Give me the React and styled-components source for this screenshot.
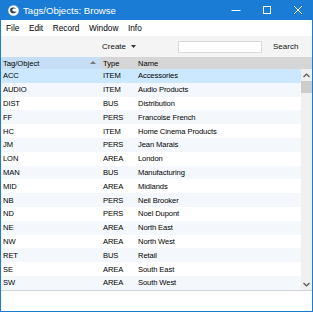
import React from 'react';
import styled, { createGlobalStyle } from 'styled-components';

const Global = createGlobalStyle`
  html, body { margin: 0; padding: 0; background: #fff; }
  body { font-family: "Liberation Sans", Arial, sans-serif; }
  * { box-sizing: border-box; }
`;

const Window = styled.div`
  width: 313px;
  height: 312px;
  border: 1px solid #1b7cd5;
  border-top: none;
  display: flex;
  flex-direction: column;
  overflow: hidden;
  background: #fff;
`;

const TitleBar = styled.div`
  height: 20px;
  margin: 0 -1px;
  background: #1b7cd5;
  display: flex;
  align-items: center;
  color: #fff;
  padding-left: 8px;
`;

const TitleText = styled.span`
  margin-left: 4px;
  flex: 1;
  font-size: 9.6px;
`;

const WinButton = styled.div`
  width: 31px;
  height: 20px;
  display: flex;
  align-items: center;
  justify-content: center;
`;

const MenuBar = styled.div`
  height: 16px;
  display: flex;
  align-items: center;
  padding-left: 5px;
  gap: 9.5px;
  font-size: 8.3px;
  color: #000;
  background: #fff;
`;

const MenuItem = styled.span``;

const Toolbar = styled.div`
  height: 21px;
  background: #f4f4f4;
  display: flex;
  align-items: center;
  font-size: 8px;
  color: #111;
`;

const CreateButton = styled.div`
  margin-left: 101px;
  display: flex;
  align-items: center;
  gap: 5px;
`;

const SearchBox = styled.div`
  margin-left: 42px;
  width: 84px;
  height: 12px;
  background: #fff;
  border: 1px solid #d9d9d9;
`;

const SearchButton = styled.span`
  margin-left: 11px;
`;

const Header = styled.div`
  height: 12px;
  display: flex;
  background: #d6d6d6;
  font-size: 7.6px;
  color: #000;
`;

const HeadCell = styled.div`
  width: ${p => p.$w}px;
  flex: ${p => (p.$grow ? 1 : 'none')};
  display: flex;
  align-items: center;
  padding-left: 2px;
  background: ${p => (p.$active ? '#c6def5' : 'transparent')};
  position: relative;
`;

const SortArrow = styled.span`
  position: absolute;
  right: 5px;
  top: 4px;
  width: 0;
  height: 0;
  border-left: 3px solid transparent;
  border-right: 3px solid transparent;
  border-bottom: 3px solid #777;
`;

const Body = styled.div`
  display: flex;
  height: 221px;
`;

const Rows = styled.div`
  flex: 1;
  display: flex;
  flex-direction: column;
`;

const Row = styled.div`
  height: 13.8px;
  display: flex;
  align-items: center;
  font-size: 7.6px;
  letter-spacing: -0.1px;
  color: #000;
  background: ${p => (p.$selected ? '#cce8ff' : p.$alt ? '#f4f8fd' : '#fff')};
`;

const Cell = styled.div`
  width: ${p => p.$w}px;
  flex: ${p => (p.$grow ? 1 : 'none')};
  padding-left: 2px;
  white-space: nowrap;
  overflow: hidden;
`;

const Scrollbar = styled.div`
  width: 11px;
  background: #f0f0f0;
  display: flex;
  flex-direction: column;
  align-items: center;
`;

const ScrollArrow = styled.div`
  height: 12px;
  width: 11px;
  display: flex;
  align-items: center;
  justify-content: center;
`;

const Thumb = styled.div`
  width: 11px;
  height: 12px;
  background: #cdcdcd;
`;

const Spacer = styled.div`
  flex: 1;
`;

const Footer = styled.div`
  flex: 1;
  border-top: 1px solid #d2d2d2;
  background: #fff;
`;

const data = [
  ['ACC', 'ITEM', 'Accessories'],
  ['AUDIO', 'ITEM', 'Audio Products'],
  ['DIST', 'BUS', 'Distribution'],
  ['FF', 'PERS', 'Francoise French'],
  ['HC', 'ITEM', 'Home Cinema Products'],
  ['JM', 'PERS', 'Jean Marais'],
  ['LON', 'AREA', 'London'],
  ['MAN', 'BUS', 'Manufacturing'],
  ['MID', 'AREA', 'Midlands'],
  ['NB', 'PERS', 'Neil Brooker'],
  ['ND', 'PERS', 'Noel Dupont'],
  ['NE', 'AREA', 'North East'],
  ['NW', 'AREA', 'North West'],
  ['RET', 'BUS', 'Retail'],
  ['SE', 'AREA', 'South East'],
  ['SW', 'AREA', 'South West'],
];

const Logo = () => (
  <svg width="11" height="11" viewBox="0 0 11 11">
    <circle cx="5.5" cy="5.5" r="5.3" fill="#fff" />
    <path d="M2.5 3.5 C4 2 7 2.3 8 4 C6.5 3.2 4.5 3.6 4.3 5 C4.1 6.5 6.5 7 8.5 6.6 C7.5 8.6 4 9 2.8 7.2 C2 6 2 4.5 2.5 3.5 Z" fill="#2a3a55" />
  </svg>
);

export default function App() {
  return (
    <>
      <Global />
      <Window>
        <TitleBar>
          <Logo />
          <TitleText>Tags/Objects: Browse</TitleText>
          <WinButton>
            <svg width="10" height="10" viewBox="0 0 10 10"><path d="M0.5 5.5h9" stroke="#fff" strokeWidth="1" /></svg>
          </WinButton>
          <WinButton>
            <svg width="10" height="10" viewBox="0 0 10 10"><rect x="1.5" y="1.5" width="7" height="7" fill="none" stroke="#fff" strokeWidth="1" /></svg>
          </WinButton>
          <WinButton>
            <svg width="10" height="10" viewBox="0 0 10 10"><path d="M1 1L9 9M9 1L1 9" stroke="#fff" strokeWidth="1" /></svg>
          </WinButton>
        </TitleBar>
        <MenuBar>
          <MenuItem>File</MenuItem>
          <MenuItem>Edit</MenuItem>
          <MenuItem>Record</MenuItem>
          <MenuItem>Window</MenuItem>
          <MenuItem>Info</MenuItem>
        </MenuBar>
        <Toolbar>
          <CreateButton>
            <span>Create</span>
            <svg width="5" height="3" viewBox="0 0 5 3"><path d="M0 0h5L2.5 3z" fill="#333" /></svg>
          </CreateButton>
          <SearchBox />
          <SearchButton>Search</SearchButton>
        </Toolbar>
        <Header>
          <HeadCell $w={100} $active>Tag/Object<SortArrow /></HeadCell>
          <HeadCell $w={35}>Type</HeadCell>
          <HeadCell $grow>Name</HeadCell>
        </Header>
        <Body>
          <Rows>
            {data.map((r, i) => (
              <Row key={r[0]} $selected={i === 0} $alt={i % 2 === 1}>
                <Cell $w={100}>{r[0]}</Cell>
                <Cell $w={35}>{r[1]}</Cell>
                <Cell $grow>{r[2]}</Cell>
              </Row>
            ))}
          </Rows>
          <Scrollbar>
            <ScrollArrow>
              <svg width="7" height="5" viewBox="0 0 7 5"><path d="M0.5 4L3.5 1L6.5 4" stroke="#555" strokeWidth="1.2" fill="none" /></svg>
            </ScrollArrow>
            <Thumb />
            <Spacer />
            <ScrollArrow>
              <svg width="7" height="5" viewBox="0 0 7 5"><path d="M0.5 1L3.5 4L6.5 1" stroke="#555" strokeWidth="1.2" fill="none" /></svg>
            </ScrollArrow>
          </Scrollbar>
        </Body>
        <Footer />
      </Window>
    </>
  );
}
